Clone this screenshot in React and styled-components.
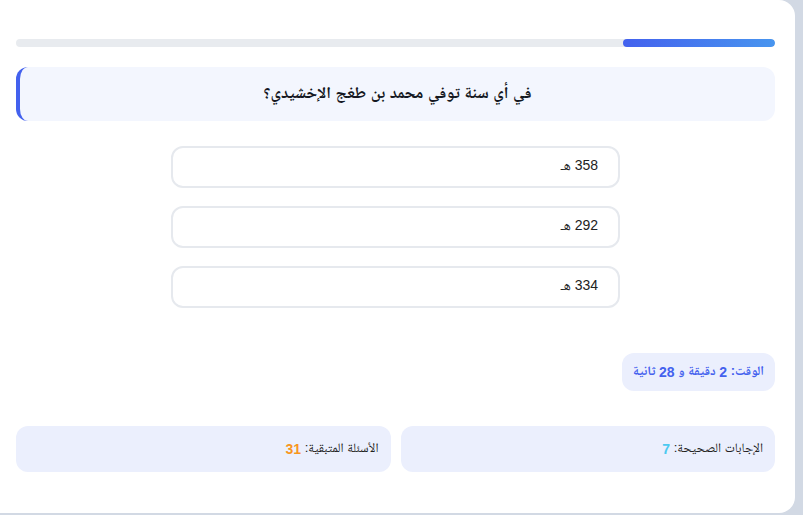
import React from "react";
import styled, { createGlobalStyle } from "styled-components";

const Global = createGlobalStyle`
  html, body { margin: 0; padding: 0; }
  body {
    background: #d2d9e4;
    font-family: "Liberation Sans", "Noto Naskh Arabic", sans-serif;
    width: 803px;
    height: 515px;
    overflow: hidden;
  }
`;

const Card = styled.div`
  direction: rtl;
  box-sizing: border-box;
  width: 799px;
  height: 513px;
  margin-left: -4px;
  background: #ffffff;
  border-radius: 0 16px 16px 0;
  padding: 39px 20px 0 20px;
  display: flex;
  flex-direction: column;
`;

const Track = styled.div`
  height: 8px;
  background: #e8ebef;
  border-radius: 4px;
  overflow: hidden;
  display: flex;
`;

const Fill = styled.div`
  height: 100%;
  border-radius: 4px;
  background: linear-gradient(to left, #4895ef, #4361ee);
`;

const Question = styled.div`
  margin-top: 20px;
  height: 54px;
  box-sizing: border-box;
  background: #f3f6fe;
  border-left: 4px solid #4361ee;
  border-radius: 12px;
  display: flex;
  align-items: center;
  justify-content: center;
  font-size: 16.5px;
  font-weight: 700;
  color: #151822;
`;

const Options = styled.div`
  margin-top: 25px;
  display: flex;
  flex-direction: column;
  align-items: center;
  gap: 18px;
`;

const Option = styled.button`
  direction: rtl;
  width: 449px;
  height: 42px;
  box-sizing: border-box;
  background: #ffffff;
  border: 2px solid #e6e9ee;
  border-radius: 12px;
  padding: 0 20px;
  text-align: right;
  font-family: inherit;
  font-size: 14px;
  color: #222;
  cursor: pointer;
`;

const TimerRow = styled.div`
  margin-top: 45px;
  display: flex;
`;

const Timer = styled.div`
  height: 38px;
  box-sizing: border-box;
  padding: 0 11px;
  background: #ebeffd;
  border-radius: 12px;
  display: flex;
  align-items: center;
  font-size: 13px;
  font-weight: 700;
  color: #4361ee;
`;

const Big = styled.span`
  font-size: 14px;
`;

const Stats = styled.div`
  margin-top: 35px;
  display: grid;
  grid-template-columns: 1fr 1fr;
  gap: 10px;
`;

const Stat = styled.div`
  height: 46px;
  box-sizing: border-box;
  padding: 0 12px;
  background: #ebeffd;
  border-radius: 12px;
  display: flex;
  align-items: center;
  font-size: 13px;
  color: #222;
`;

const Value = styled.span`
  font-weight: 700;
  font-size: 14px;
  color: ${(p) => p.$color};
`;

export default function App() {
  const options = ["358 هـ", "292 هـ", "334 هـ"];
  return (
    <>
      <Global />
      <Card>
        <Track>
          <Fill style={{ width: "20%" }} />
        </Track>
        <Question>في أي سنة توفي محمد بن طغج الإخشيدي؟</Question>
        <Options>
          {options.map((o) => (
            <Option key={o}>{o}</Option>
          ))}
        </Options>
        <TimerRow>
          <Timer>
            الوقت:&nbsp;<Big>2</Big>&nbsp;دقيقة و&nbsp;<Big>28</Big>&nbsp;ثانية
          </Timer>
        </TimerRow>
        <Stats>
          <Stat>
            الإجابات الصحيحة:&nbsp;<Value $color="#4cc9f0">7</Value>
          </Stat>
          <Stat>
            الأسئلة المتبقية:&nbsp;<Value $color="#f8961e">31</Value>
          </Stat>
        </Stats>
      </Card>
    </>
  );
}
